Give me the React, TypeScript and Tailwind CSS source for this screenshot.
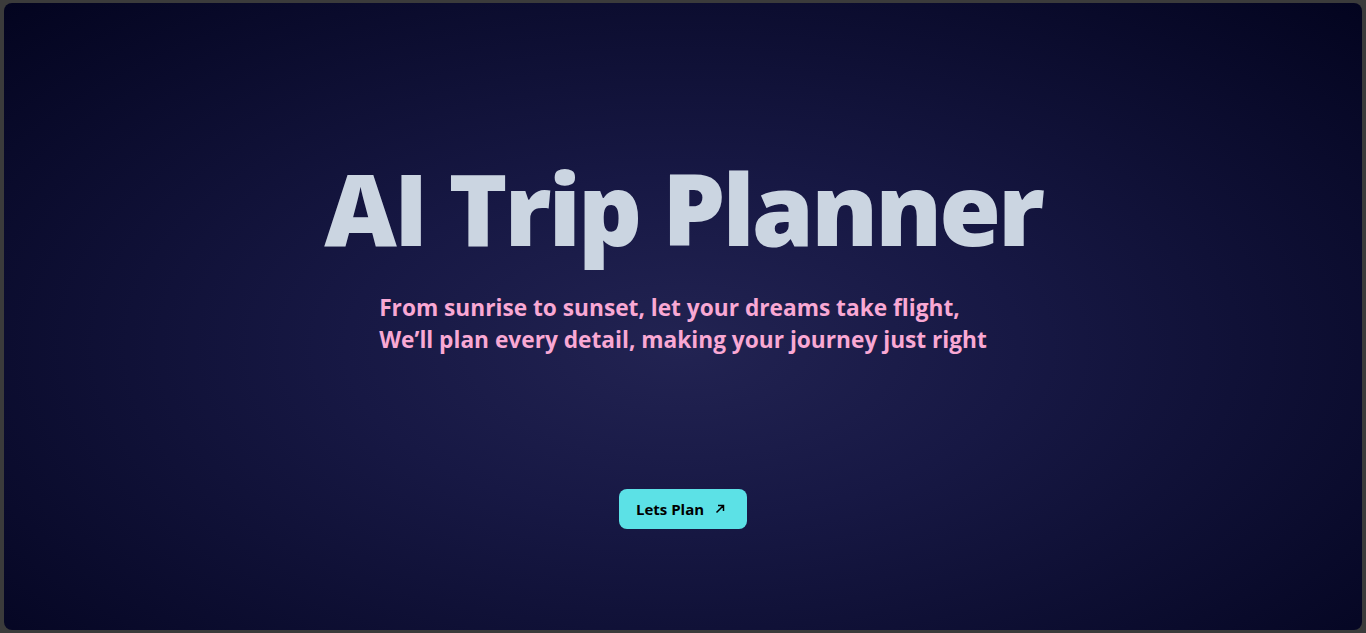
import React from "react";

export default function App() {
  return (
    <div className="h-[633px] w-full bg-[#3b3b3b] pt-[3px] pb-[3px] pl-[4px] pr-[4px]" style={{ fontFamily: '"Open Sans", "Noto Sans", sans-serif' }}>
      <div className="h-full w-full rounded-[8px] bg-[radial-gradient(ellipse_at_50%_55%,#222352_0%,#171844_35%,#03041f_100%)] flex flex-col items-center">
        <h1 className="mt-[154px] text-[100px] leading-[1] font-extrabold text-[#cbd5e1] tracking-[-3px]">
          AI Trip Planner
        </h1>
        <p className="mt-[35px] text-[22.7px] leading-[32px] font-bold text-[#f9a8d4]">
          From sunrise to sunset, let your dreams take flight,
          <br />
          We’ll plan every detail, making your journey just right
        </p>
        <button className="mt-[133px] h-[40px] w-[128px] rounded-[8px] bg-[#5ce1e6] flex items-center pl-[17px] gap-[10px] text-[15px] font-bold text-black">
          Lets Plan
          <svg width="12" height="12" viewBox="0 0 12 12" fill="none" stroke="black" strokeWidth="1.5">
            <path d="M2.5 9.5 L9.5 2.5 M4 2.5 H9.5 V8" />
          </svg>
        </button>
      </div>
    </div>
  );
}
